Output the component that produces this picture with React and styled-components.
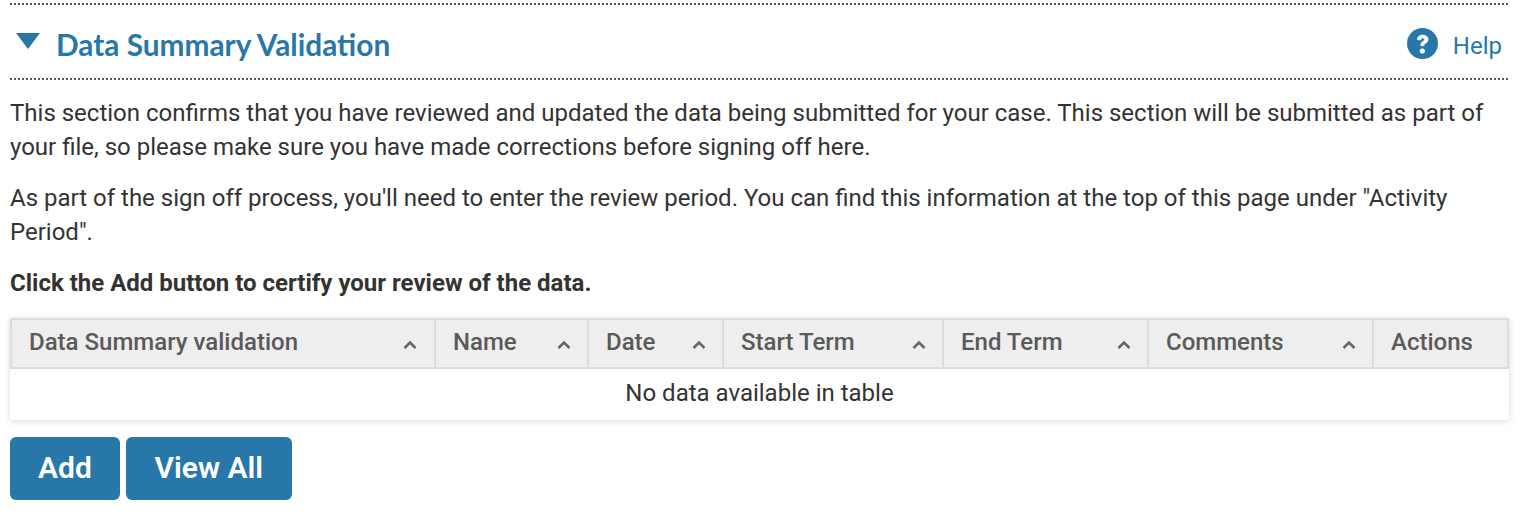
import React from 'react';
import styled, { createGlobalStyle } from 'styled-components';

const Global = createGlobalStyle`
  html, body { margin: 0; padding: 0; background: #fff; }
  body { font-family: Roboto, "Liberation Sans", sans-serif; color: #333; }
`;

const Page = styled.div`
  width: 1530px;
  height: 520px;
  padding: 3px 21px 0 10px;
  box-sizing: border-box;
  overflow: hidden;
`;

const Header = styled.header`
  display: flex;
  align-items: center;
  justify-content: space-between;
  height: 77px;
  box-sizing: border-box;
  padding-top: 6px;
  padding-bottom: 2px;
  background-image:
    repeating-linear-gradient(90deg, #555 0 2px, transparent 2px 4px),
    repeating-linear-gradient(90deg, #555 0 2px, transparent 2px 4px);
  background-size: 100% 2px, 100% 2px;
  background-position: left top, left bottom;
  background-repeat: no-repeat;
`;

const TitleGroup = styled.div`
  display: flex;
  align-items: center;
  gap: 16px;
  padding-left: 6px;
`;

const Arrow = styled.svg`
  width: 24px;
  height: 16px;
  margin-top: -6px;
  fill: #2778a8;
`;

const Title = styled.h2`
  margin: 0;
  padding-top: 2px;
  font-family: Lato, "Open Sans", sans-serif;
  font-size: 29.8px;
  font-weight: 700;
  line-height: 34px;
  color: #2778a8;
`;

const HelpLink = styled.a`
  display: flex;
  align-items: center;
  gap: 15px;
  padding-right: 7px;
  font-size: 24px;
  color: #2778a8;
`;

const HelpText = styled.span`
  padding-top: 4px;
`;

const HelpIcon = styled.svg`
  width: 31px;
  height: 31px;
`;

const Paragraph = styled.p`
  margin: 0 0 18px;
  font-size: 24px;
  line-height: 33.6px;
  color: #333;
  font-weight: ${p => (p.$bold ? 700 : 400)};
  &:last-child { margin-bottom: 17px; }
`;

const Intro = styled.div`
  padding-top: 17px;
`;

const TableCard = styled.div`
  background: #fff;
  box-shadow: 0 1px 6px rgba(0, 0, 0, 0.16);
`;

const HeadRow = styled.div`
  display: grid;
  grid-template-columns: 422px 153px 135px 220px 205px 225px 136px;
  height: 51px;
  box-sizing: border-box;
  background: #eee;
  border: 2px solid #ddd;
`;

const HeadCell = styled.div`
  display: flex;
  align-items: center;
  justify-content: space-between;
  box-sizing: border-box;
  padding: 0 ${p => (p.$first ? 17 : 16)}px 2px 17px;
  font-size: 24px;
  font-weight: 500;
  color: #5a5a5a;
  border-left: ${p => (p.$first ? 'none' : '2px solid #ddd')};
`;

const SortIcon = styled.svg`
  width: 14px;
  height: 10px;
  margin-top: 5px;
  flex: none;
`;

const EmptyRow = styled.div`
  height: 51px;
  box-sizing: border-box;
  padding-bottom: 2px;
  display: flex;
  align-items: center;
  justify-content: center;
  font-size: 24px;
  color: #333;
`;

const Actions = styled.div`
  display: flex;
  gap: 6px;
  margin-top: 17px;
`;

const Button = styled.button`
  height: 63px;
  min-width: ${p => p.$minWidth || 0}px;
  padding: 0 28px 2px;
  border: none;
  border-radius: 6px;
  background: #2778a8;
  color: #fff;
  font-family: Roboto, "Liberation Sans", sans-serif;
  font-size: 30px;
  font-weight: 600;
`;

const columns = ['Data Summary validation', 'Name', 'Date', 'Start Term', 'End Term', 'Comments', 'Actions'];

export default function App() {
  return (
    <Page>
      <Global />
      <Header>
        <TitleGroup>
          <Arrow viewBox="0 0 24 16"><path d="M0 0h24L12 16z" /></Arrow>
          <Title>Data Summary Validation</Title>
        </TitleGroup>
        <HelpLink>
          <HelpIcon viewBox="0 0 31 31">
            <circle cx="15.5" cy="15.5" r="15.5" fill="#2778a8" />
            <path d="M10.2 11.6c.3-3 2.6-4.6 5.5-4.6 3 0 5.4 1.8 5.4 4.4 0 2-1.1 3-2.5 3.9-1.2.8-1.5 1.2-1.5 2.4h-3.4c0-2.4.7-3.4 2.2-4.3 1-.6 1.6-1.1 1.6-1.9 0-.9-.8-1.5-1.8-1.5-1.1 0-1.9.7-2.1 2z" fill="#fff" stroke="#fff" strokeWidth="0.6" />
            <circle cx="15.3" cy="23" r="2.6" fill="#fff" />
          </HelpIcon>
          <HelpText>Help</HelpText>
        </HelpLink>
      </Header>
      <Intro>
        <Paragraph>This section confirms that you have reviewed and updated the data being submitted for your case. This section will be submitted as part of your file, so please make sure you have made corrections before signing off here.</Paragraph>
        <Paragraph>As part of the sign off process, you'll need to enter the review period. You can find this information at the top of this page under "Activity Period".</Paragraph>
        <Paragraph $bold>Click the Add button to certify your review of the data.</Paragraph>
      </Intro>
      <TableCard>
        <HeadRow>
          {columns.map((c, i) => (
            <HeadCell key={c} $first={i === 0}>
              {c}
              {c !== 'Actions' && (
                <SortIcon viewBox="0 0 14 10"><path d="M1.5 8 7 2.5 12.5 8" fill="none" stroke="#666" strokeWidth="2.6" /></SortIcon>
              )}
            </HeadCell>
          ))}
        </HeadRow>
        <EmptyRow>No data available in table</EmptyRow>
      </TableCard>
      <Actions>
        <Button>Add</Button>
        <Button $minWidth={166}>View All</Button>
      </Actions>
    </Page>
  );
}
